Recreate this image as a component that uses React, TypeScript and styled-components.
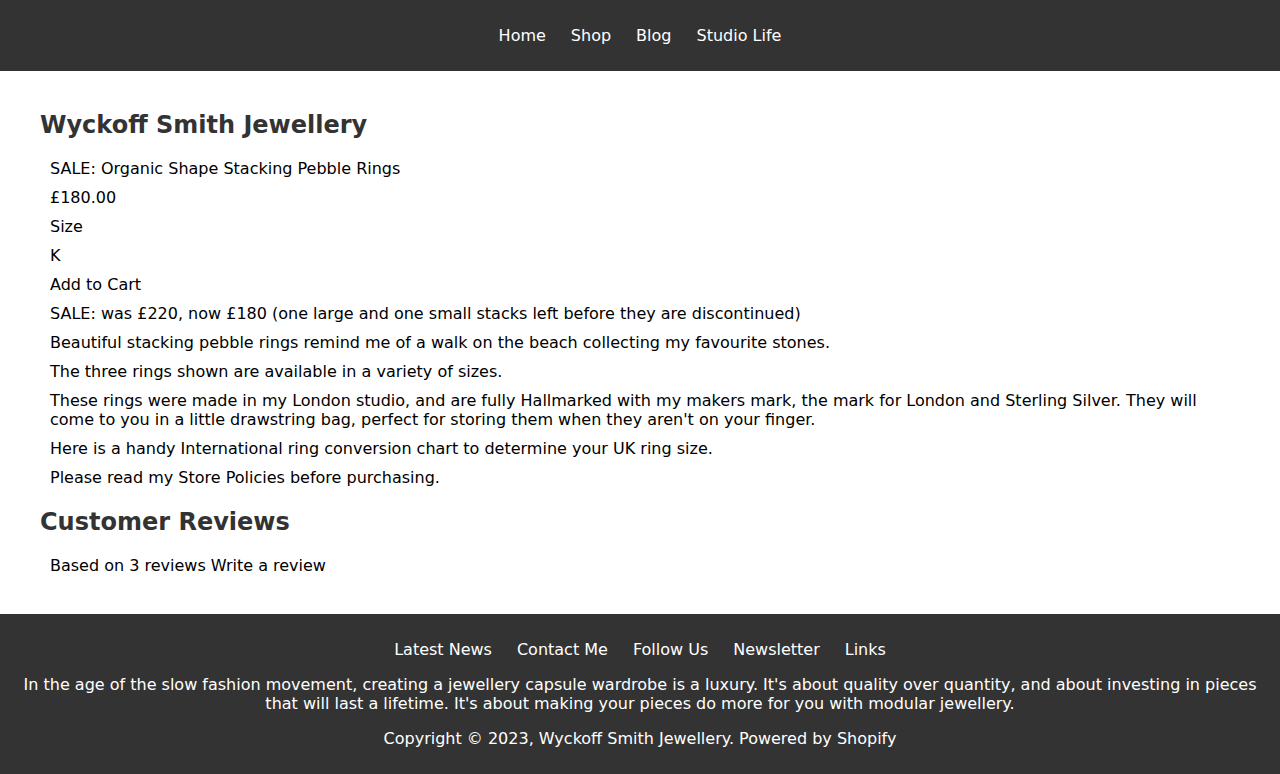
import React from "react";
import styled, { createGlobalStyle } from "styled-components";

const Global = createGlobalStyle`
  html, body { margin: 0; padding: 0; background: #fff; }
  body { font-family: "DejaVu Sans", sans-serif; font-size: 16px; color: #000; }
`;

const Header = styled.header`
  background: #333;
  height: 71px;
  display: flex;
  justify-content: center;
  align-items: center;
  gap: 25px;
`;

const NavLink = styled.a`
  color: #fff;
  text-decoration: none;
  font-size: 16px;
`;

const Main = styled.main`
  padding: 24px 40px 34px;
`;

const Heading = styled.h2`
  color: #333;
  font-size: 24px;
  font-weight: bold;
  margin: 16px 0 15px;
  line-height: 28px;
`;

const List = styled.div`
  display: flex;
  flex-direction: column;
  gap: 10px;
  padding: 5px 10px;
`;

const Item = styled.div`
  line-height: 19px;
`;

const Footer = styled.footer`
  background: #333;
  color: #fff;
  padding: 26px 20px 26px;
  text-align: center;
  display: flex;
  flex-direction: column;
  gap: 16px;
`;

const FootNav = styled.nav`
  display: flex;
  justify-content: center;
  gap: 25px;
`;

const FootLink = styled.a`
  color: #fff;
  text-decoration: none;
`;

const FootText = styled.p`
  margin: 0;
  line-height: 19px;
`;

const items = [
  "SALE: Organic Shape Stacking Pebble Rings",
  "£180.00",
  "Size",
  "K",
  "Add to Cart",
  "SALE: was £220, now £180 (one large and one small stacks left before they are discontinued)",
  "Beautiful stacking pebble rings remind me of a walk on the beach collecting my favourite stones.",
  "The three rings shown are available in a variety of sizes.",
  "These rings were made in my London studio, and are fully Hallmarked with my makers mark, the mark for London and Sterling Silver. They will come to you in a little drawstring bag, perfect for storing them when they aren't on your finger.",
  "Here is a handy International ring conversion chart to determine your UK ring size.",
  "Please read my Store Policies before purchasing.",
];

export default function App() {
  return (
    <>
      <Global />
      <Header>
        {["Home", "Shop", "Blog", "Studio Life"].map((l) => (
          <NavLink key={l} href="#">{l}</NavLink>
        ))}
      </Header>
      <Main>
        <Heading>Wyckoff Smith Jewellery</Heading>
        <List>
          {items.map((t, i) => (
            <Item key={i}>{t}</Item>
          ))}
        </List>
        <Heading>Customer Reviews</Heading>
        <List>
          <Item>Based on 3 reviews Write a review</Item>
        </List>
      </Main>
      <Footer>
        <FootNav>
          {["Latest News", "Contact Me", "Follow Us", "Newsletter", "Links"].map((l) => (
            <FootLink key={l} href="#">{l}</FootLink>
          ))}
        </FootNav>
        <FootText>
          In the age of the slow fashion movement, creating a jewellery capsule wardrobe is a luxury. It's about quality over quantity, and about investing in pieces that will last a lifetime. It's about making your pieces do more for you with modular jewellery.
        </FootText>
        <FootText>Copyright © 2023, Wyckoff Smith Jewellery. Powered by Shopify</FootText>
      </Footer>
    </>
  );
}
